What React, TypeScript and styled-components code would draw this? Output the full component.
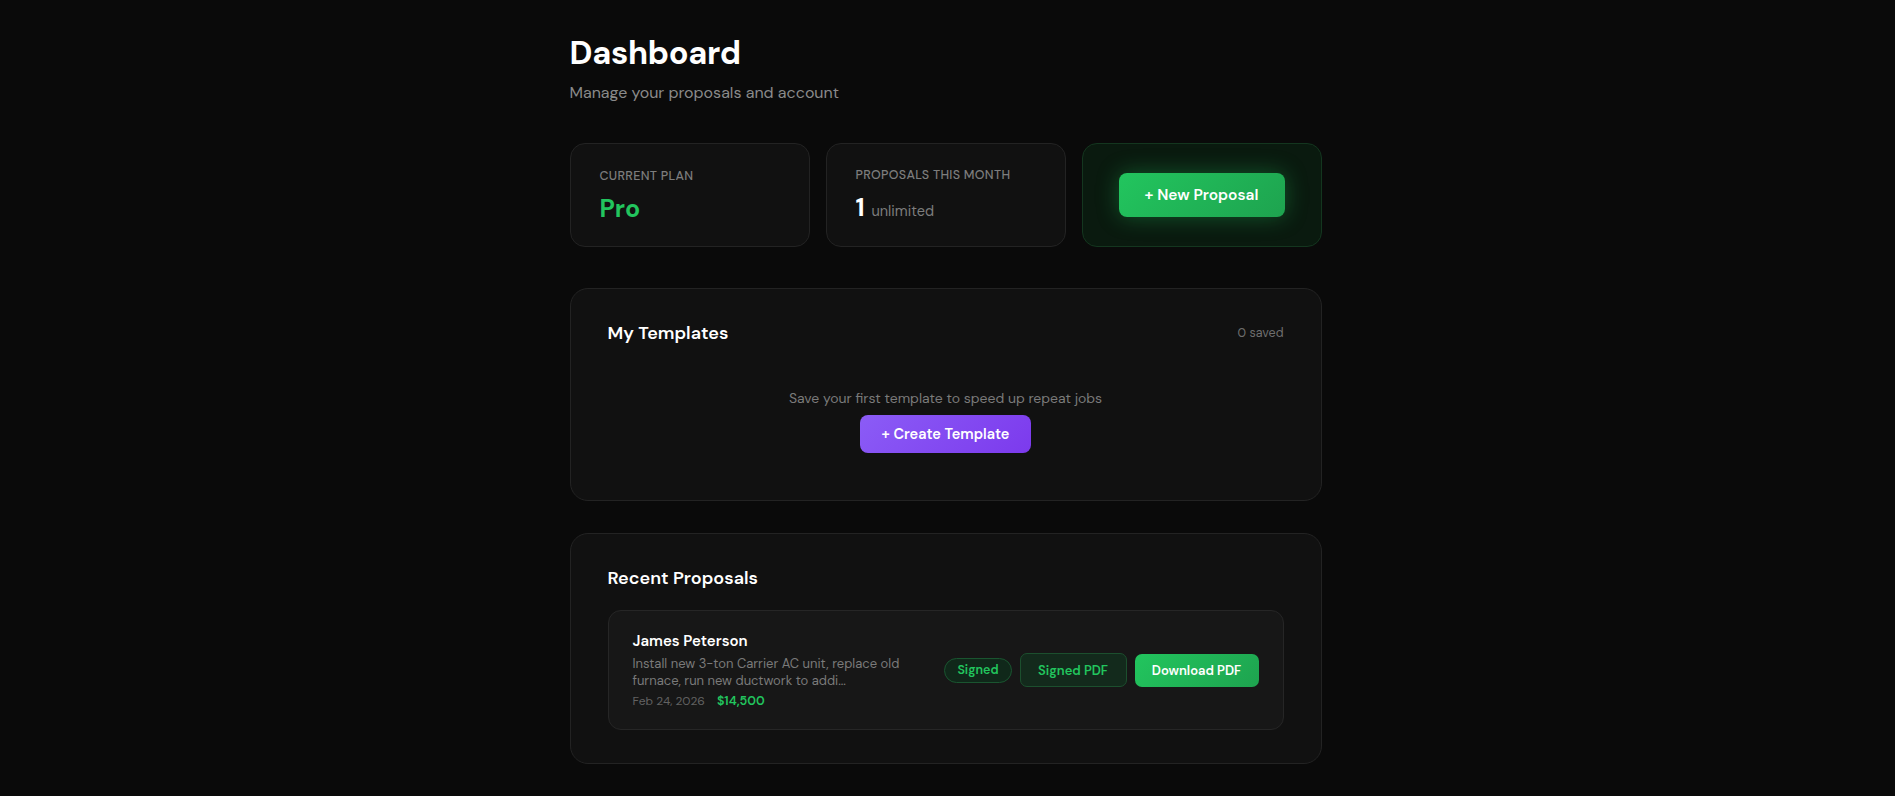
import React from 'react'
import styled, { createGlobalStyle } from 'styled-components'

const GlobalStyle = createGlobalStyle`
    * { box-sizing: border-box; }
    body {
        margin: 0;
        background: #0a0a0a;
        color: #fafafa;
        font-family: "DM Sans", Inter, "Noto Sans", sans-serif;
    }
`

const proposals = [
    {
        id: 1,
        client: 'James Peterson',
        description: 'Install new 3-ton Carrier AC unit, replace old furnace, run new ductwork to addi...',
        date: 'Feb 24, 2026',
        total: '$14,500',
        status: 'Signed',
    },
]

const App = () => {
    return (
        <Page>
            <GlobalStyle />
            <Container>
                <Title>Dashboard</Title>
                <Subtitle>Manage your proposals and account</Subtitle>

                <StatsGrid>
                    <StatCard>
                        <StatLabel>Current Plan</StatLabel>
                        <StatValue green>Pro</StatValue>
                    </StatCard>
                    <StatCard>
                        <StatLabel>Proposals this month</StatLabel>
                        <StatValue>
                            1 <StatHint>unlimited</StatHint>
                        </StatValue>
                    </StatCard>
                    <ActionCard>
                        <PrimaryButton>+ New Proposal</PrimaryButton>
                    </ActionCard>
                </StatsGrid>

                <Section>
                    <SectionHeader>
                        <SectionTitle>My Templates</SectionTitle>
                        <SectionMeta>0 saved</SectionMeta>
                    </SectionHeader>
                    <EmptyState>
                        <EmptyText>Save your first template to speed up repeat jobs</EmptyText>
                        <PurpleButton>+ Create Template</PurpleButton>
                    </EmptyState>
                </Section>

                <Section tight>
                    <SectionHeader>
                        <SectionTitle>Recent Proposals</SectionTitle>
                    </SectionHeader>
                    {proposals.map((p) => (
                        <ProposalRow key={p.id}>
                            <ProposalInfo>
                                <ClientName>{p.client}</ClientName>
                                <Description>{p.description}</Description>
                                <MetaLine>
                                    <DateText>{p.date}</DateText>
                                    <Amount>{p.total}</Amount>
                                </MetaLine>
                            </ProposalInfo>
                            <Actions>
                                <Badge>{p.status}</Badge>
                                <GhostButton>Signed PDF</GhostButton>
                                <DownloadButton>Download PDF</DownloadButton>
                            </Actions>
                        </ProposalRow>
                    ))}
                </Section>
            </Container>
        </Page>
    )
}

const Page = styled.div`
    min-height: 100vh;
    background: #0a0a0a;
`

const Container = styled.div`
    width: 752px;
    margin: 0 auto;
    padding: 33px 0 40px;
    transform: translateX(-2px);
`

const Title = styled.h1`
    margin: 0;
    font-size: 32.5px;
    line-height: 40px;
    font-weight: 700;
    color: #ffffff;
    letter-spacing: -0.3px;
`

const Subtitle = styled.p`
    margin: 8px 0 0;
    font-size: 16px;
    line-height: 24px;
    color: #8a8a8a;
`

const StatsGrid = styled.div`
    display: grid;
    grid-template-columns: repeat(3, 1fr);
    gap: 16px;
    margin-top: 38px;
`

const StatCard = styled.div`
    height: 104px;
    padding: 2px 29px 0;
    background: #111111;
    border: 1px solid #232323;
    border-radius: 15px;
    display: flex;
    flex-direction: column;
    justify-content: center;
    gap: 10px;
`

const StatLabel = styled.div`
    font-size: 12.5px;
    line-height: 16px;
    font-weight: 500;
    letter-spacing: 0.3px;
    text-transform: uppercase;
    color: #7d7d7d;
`

const StatValue = styled.div<{ green?: boolean }>`
    font-size: 25px;
    line-height: 30px;
    font-weight: 700;
    color: ${(p) => (p.green ? '#22c55e' : '#ffffff')};
`

const StatHint = styled.span`
    font-size: 14.5px;
    font-weight: 400;
    color: #7d7d7d;
    margin-left: 1px;
`

const ActionCard = styled.div`
    height: 104px;
    background: #0a1a0f;
    border: 1px solid #14361f;
    border-radius: 15px;
    display: flex;
    align-items: center;
    justify-content: center;
`

const PrimaryButton = styled.button`
    width: 166px;
    height: 44px;
    border: none;
    border-radius: 8px;
    background: linear-gradient(135deg, #22c55e, #1ea34f);
    color: #ffffff;
    font-family: inherit;
    font-size: 15.5px;
    font-weight: 600;
    box-shadow: 0 0 22px rgba(34, 197, 94, 0.35);
    cursor: pointer;
`

const Section = styled.div<{ tight?: boolean }>`
    margin-top: ${(p) => (p.tight ? '32px' : '41px')};
    padding: 32px 37px 33px;
    background: #111111;
    border: 1px solid #232323;
    border-radius: 18px;
`

const SectionHeader = styled.div`
    display: flex;
    align-items: center;
    justify-content: space-between;
`

const SectionTitle = styled.h2`
    margin: 0;
    font-size: 18px;
    line-height: 24px;
    font-weight: 600;
    color: #ffffff;
`

const SectionMeta = styled.span`
    font-size: 12.5px;
    color: #6e6e6e;
`

const EmptyState = styled.div`
    display: flex;
    flex-direction: column;
    align-items: center;
    gap: 7px;
    padding: 43px 0 14px;
`

const EmptyText = styled.p`
    margin: 0;
    font-size: 14px;
    line-height: 20px;
    color: #7a7a7a;
`

const PurpleButton = styled.button`
    width: 171px;
    height: 38px;
    border: none;
    border-radius: 8px;
    background: linear-gradient(135deg, #8b5cf6, #7c3aed);
    color: #ffffff;
    font-family: inherit;
    font-size: 14.5px;
    font-weight: 600;
    cursor: pointer;
`

const ProposalRow = styled.div`
    margin-top: 20px;
    padding: 19px 24px 19px 24px;
    background: #171717;
    border: 1px solid #262626;
    border-radius: 13px;
    display: flex;
    align-items: center;
    justify-content: space-between;
    gap: 24px;
`

const ProposalInfo = styled.div`
    flex: 1;
    min-width: 0;
`

const ClientName = styled.div`
    font-size: 15px;
    line-height: 22px;
    font-weight: 600;
    color: #ffffff;
`

const Description = styled.p`
    margin: 3px 0 0;
    max-width: 275px;
    font-size: 13px;
    line-height: 17px;
    color: #7a7a7a;
`

const MetaLine = styled.div`
    margin-top: 3px;
    display: flex;
    align-items: baseline;
    gap: 12px;
    line-height: 18px;
`

const DateText = styled.span`
    font-size: 12px;
    color: #626262;
`

const Amount = styled.span`
    font-size: 12.5px;
    color: #22c55e;
    font-weight: 600;
`

const Actions = styled.div`
    display: flex;
    align-items: center;
    gap: 8px;
`

const Badge = styled.span`
    height: 25px;
    padding: 0 12px;
    display: inline-flex;
    align-items: center;
    border-radius: 999px;
    background: #10281a;
    border: 1px solid #1a5530;
    color: #22c55e;
    font-size: 12.5px;
    font-weight: 600;
`

const GhostButton = styled.button`
    width: 107px;
    height: 34px;
    border-radius: 7px;
    background: #132a1c;
    border: 1px solid #1c4f2e;
    color: #22c55e;
    font-family: inherit;
    font-size: 13px;
    font-weight: 600;
    cursor: pointer;
`

const DownloadButton = styled.button`
    width: 124px;
    height: 33px;
    border: none;
    border-radius: 7px;
    background: linear-gradient(135deg, #22c55e, #1ea34f);
    color: #ffffff;
    font-family: inherit;
    font-size: 13px;
    font-weight: 600;
    cursor: pointer;
`

export default App
